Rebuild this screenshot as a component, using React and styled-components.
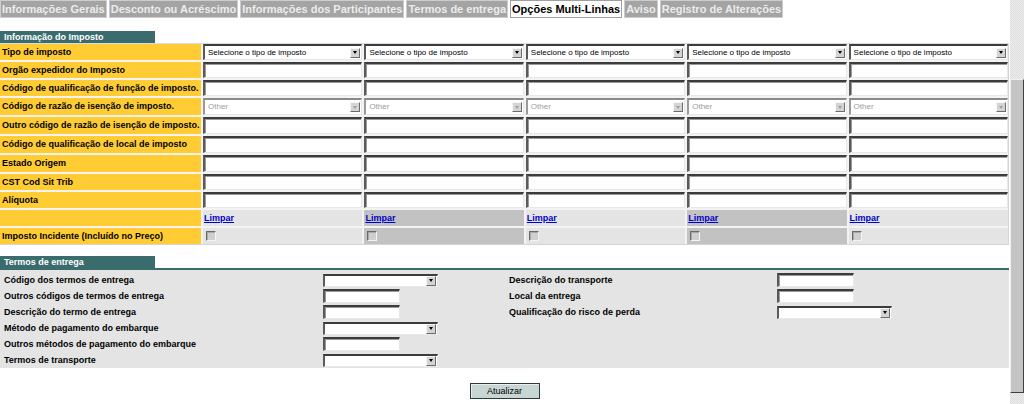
import React from 'react';
import styled, { createGlobalStyle } from 'styled-components';

const GlobalStyle = createGlobalStyle`
  html, body { margin: 0; padding: 0; background: #fff; overflow: hidden; }
  body { font-family: "Liberation Sans", Arial, sans-serif; }
`;

const FONT = `"Liberation Sans", Arial, sans-serif`;
const TEAL = '#3a6b6d';

const Page = styled.div`
  display: flex;
  width: 1024px;
  height: 404px;
  overflow: hidden;
`;

const Main = styled.div`
  flex: none;
  width: 1010px;
  display: flex;
  flex-direction: column;
  align-items: flex-start;
`;

const ScrollTrack = styled.div`
  flex: none;
  width: 14px;
  height: 404px;
  box-sizing: border-box;
  padding-top: 79px;
  background: repeating-conic-gradient(#eeeeee 0 25%, #dddddd 0 50%) 0 0 / 2px 2px;
`;

const ScrollThumb = styled.div`
  height: 314px;
  box-sizing: border-box;
  background: #c4c4c4;
  border-top: 1px solid #efefef;
  border-left: 1px solid #efefef;
  border-right: 1px solid #404040;
  border-bottom: 1px solid #404040;
`;

const TabBar = styled.div`
  display: flex;
  gap: 2px;
  height: 18px;
`;

const Tab = styled.div`
  box-sizing: border-box;
  height: 18px;
  padding: 0 1px;
  border: 1px solid ${p => (p.$active ? '#a0a0a0' : '#cdcdcd')};
  background: ${p => (p.$active ? '#ffffff' : '#a4a4a4')};
  color: ${p => (p.$active ? '#000000' : '#ececec')};
  font: bold 11px/16px ${FONT};
  white-space: nowrap;
`;

const SectionHead = styled.div`
  box-sizing: border-box;
  width: 155px;
  height: 12px;
  margin-top: ${p => p.$top}px;
  padding-left: 4px;
  background: ${TEAL};
  color: #ffffff;
  font: bold 9px/12px ${FONT};
  white-space: nowrap;
`;

const TaxGrid = styled.div`
  box-sizing: border-box;
  width: 1009px;
  display: grid;
  grid-template-columns: 201px repeat(5, 1fr);
  grid-template-rows: 16px 16px 16px 17px 17px 17px 17px 16px 16px 16px 16px;
  gap: 2px;
  background: #f3f3f3;
  border-top: 1px solid #dcdcdc;
  border-right: 1px solid #d4d4d4;
  border-bottom: 1px solid #d4d4d4;
`;

const LabelCell = styled.div`
  display: flex;
  align-items: center;
  padding-left: 2px;
  background: #ffcc33;
  color: #000;
  font: bold 9px/1 ${FONT};
  white-space: nowrap;
`;

const DataCell = styled.div`
  display: flex;
  align-items: center;
  min-width: 0;
  background: ${p => (p.$dark ? '#c2c2c2' : '#e4e4e4')};
  padding-left: ${p => p.$pad || 0}px;
`;

const TextInput = styled.div`
  box-sizing: border-box;
  width: ${p => (p.$w ? `${p.$w}px` : '100%')};
  height: ${p => (p.$h ? `${p.$h}px` : '100%')};
  background: #ffffff;
  border-style: solid;
  border-width: 2px 1px 1px 2px;
  border-color: #3c3c3c #e8e8e8 #e8e8e8 #5a5a5a;
  box-shadow: inset 1px 1px 0 #9a9a9a;
`;

const SelectBox = styled.div`
  box-sizing: border-box;
  width: ${p => (p.$w ? `${p.$w}px` : '100%')};
  height: ${p => (p.$h ? `${p.$h}px` : '100%')};
  display: flex;
  align-items: center;
  justify-content: space-between;
  padding-left: 3px;
  background: #ffffff;
  border-style: solid;
  border-width: 2px 1px 1px 2px;
  border-color: ${p => (p.$disabled ? '#8a8a8a #e8e8e8 #e8e8e8 #9a9a9a' : '#3c3c3c #e8e8e8 #e8e8e8 #5a5a5a')};
  color: ${p => (p.$disabled ? '#9c9c9c' : '#000000')};
  font: 8px/1 ${FONT};
  white-space: nowrap;
  overflow: hidden;
`;

const Arrow = styled.span`
  flex: none;
  box-sizing: border-box;
  width: 10px;
  height: 10px;
  margin-right: 1px;
  display: flex;
  align-items: center;
  justify-content: center;
  background: #d4d4d4;
  border: 1px solid;
  border-color: #f6f6f6 #6c6c6c #6c6c6c #f6f6f6;
  &::after {
    content: '';
    border-left: 2.5px solid transparent;
    border-right: 2.5px solid transparent;
    border-top: 3px solid ${p => (p.$disabled ? '#a0a0a0' : '#000000')};
  }
`;

const ClearLink = styled.a`
  color: #0000cc;
  font: bold 9px/1 ${FONT};
  text-decoration: underline;
  cursor: pointer;
`;

const CheckBox = styled.span`
  box-sizing: border-box;
  width: 10px;
  height: 10px;
  margin-left: 3px;
  background: #cfcfcf;
  border-style: solid;
  border-width: 1px;
  border-color: #6a6a6a #f4f4f4 #f4f4f4 #6a6a6a;
  box-shadow: inset 1px 1px 0 #a8a8a8;
`;

const TealRule = styled.div`
  width: 1009px;
  height: 2px;
  background: ${TEAL};
`;

const TermsPanel = styled.div`
  box-sizing: border-box;
  width: 1009px;
  height: 98px;
  padding-top: 2px;
  background: #e4e4e4;
  display: grid;
  grid-template-columns: 323px 186px 268px 1fr;
  grid-template-rows: repeat(6, 16px);
`;

const TermLabel = styled.div`
  display: flex;
  align-items: center;
  padding-left: ${p => p.$pad || 0}px;
  color: #000;
  font: bold 9px/1 ${FONT};
  white-space: nowrap;
`;

const TermField = styled.div`
  display: flex;
  align-items: center;
`;

const ButtonRow = styled.div`
  width: 1009px;
  display: flex;
  justify-content: center;
  margin-top: 15px;
`;

const Button = styled.button`
  box-sizing: border-box;
  width: 70px;
  height: 16px;
  padding: 0;
  background: #c7d5d3;
  border: 1px solid #2e3a3a;
  box-shadow: inset 1px 1px 0 #e8efee;
  color: #000;
  font: 9px/1 ${FONT};
`;

const tabs = [
  'Informações Gerais',
  'Desconto ou Acréscimo',
  'Informações dos Participantes',
  'Termos de entrega',
  'Opções Multi-Linhas',
  'Aviso',
  'Registro de Alterações',
];

const taxRows = [
  { label: 'Tipo de imposto', kind: 'select', text: 'Selecione o tipo de imposto' },
  { label: 'Orgão expedidor do Imposto', kind: 'input' },
  { label: 'Código de qualificação de função de imposto.', kind: 'input' },
  { label: 'Código de razão de isenção de imposto.', kind: 'disabled', text: 'Other' },
  { label: 'Outro código de razão de isenção de imposto.', kind: 'input' },
  { label: 'Código de qualificação de local de imposto', kind: 'input' },
  { label: 'Estado Origem', kind: 'input' },
  { label: 'CST Cod Sit Trib', kind: 'input' },
  { label: 'Alíquota', kind: 'input' },
  { label: '', kind: 'clear' },
  { label: 'Imposto Incidente (Incluído no Preço)', kind: 'check' },
];

const cols = [0, 1, 2, 3, 4];

function renderCell(row, c) {
  const dark = c % 2 === 1;
  switch (row.kind) {
    case 'select':
      return (
        <DataCell key={c} $dark={dark}>
          <SelectBox>
            {row.text}
            <Arrow />
          </SelectBox>
        </DataCell>
      );
    case 'disabled':
      return (
        <DataCell key={c} $dark={dark}>
          <SelectBox $disabled>
            {row.text}
            <Arrow $disabled />
          </SelectBox>
        </DataCell>
      );
    case 'clear':
      return (
        <DataCell key={c} $dark={dark} $pad={1}>
          <ClearLink>Limpar</ClearLink>
        </DataCell>
      );
    case 'check':
      return (
        <DataCell key={c} $dark={dark}>
          <CheckBox />
        </DataCell>
      );
    default:
      return (
        <DataCell key={c} $dark={dark}>
          <TextInput />
        </DataCell>
      );
  }
}

function Field({ type, w }) {
  if (type === 'select') {
    return (
      <TermField>
        <SelectBox $w={w} $h={13}>
          <span />
          <Arrow />
        </SelectBox>
      </TermField>
    );
  }
  if (type === 'input') {
    return (
      <TermField>
        <TextInput $w={w} $h={14} />
      </TermField>
    );
  }
  return <TermField />;
}

const termRows = [
  { l: 'Código dos termos de entrega', t: 'select', r: 'Descrição do transporte', rt: 'input' },
  { l: 'Outros códigos de termos de entrega', t: 'input', r: 'Local da entrega', rt: 'input' },
  { l: 'Descrição do termo de entrega', t: 'input', r: 'Qualificação do risco de perda', rt: 'select' },
  { l: 'Método de pagamento do embarque', t: 'select' },
  { l: 'Outros métodos de pagamento do embarque', t: 'input' },
  { l: 'Termos de transporte', t: 'select' },
];

export default function App() {
  return (
    <Page>
      <GlobalStyle />
      <Main>
        <TabBar>
          {tabs.map(t => (
            <Tab key={t} $active={t === 'Opções Multi-Linhas'}>{t}</Tab>
          ))}
        </TabBar>

        <SectionHead $top={13}>Informação do Imposto</SectionHead>
        <TaxGrid>
          {taxRows.map((row, i) => (
            <React.Fragment key={i}>
              <LabelCell>{row.label}</LabelCell>
              {cols.map(c => renderCell(row, c))}
            </React.Fragment>
          ))}
        </TaxGrid>

        <SectionHead $top={11}>Termos de entrega</SectionHead>
        <TealRule />
        <TermsPanel>
          {termRows.map((r, i) => (
            <React.Fragment key={i}>
              <TermLabel $pad={4}>{r.l}</TermLabel>
              <Field type={r.t} w={r.t === 'select' ? 115 : 77} />
              <TermLabel>{r.r || ''}</TermLabel>
              {r.rt ? <Field type={r.rt} w={r.rt === 'select' ? 115 : 77} /> : <TermField />}
            </React.Fragment>
          ))}
        </TermsPanel>

        <ButtonRow>
          <Button type="button">Atualizar</Button>
        </ButtonRow>
      </Main>
      <ScrollTrack>
        <ScrollThumb />
      </ScrollTrack>
    </Page>
  );
}
